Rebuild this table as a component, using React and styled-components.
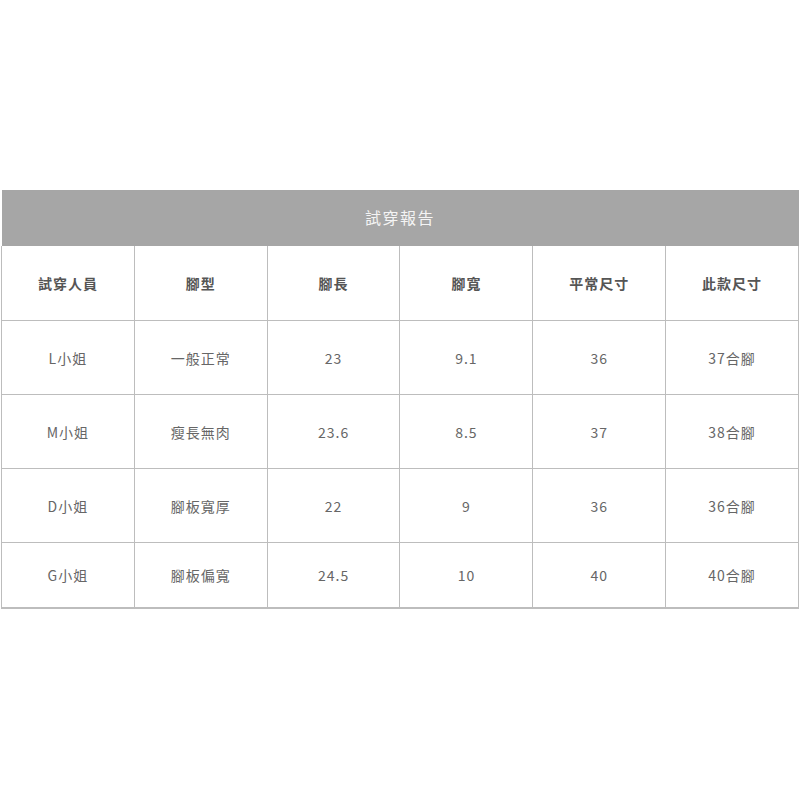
import React from 'react';
import styled, { createGlobalStyle } from 'styled-components';

const GlobalStyle = createGlobalStyle`
  html, body {
    margin: 0;
    padding: 0;
    background: #ffffff;
  }
  body {
    font-family: "Noto Sans CJK TC", "Noto Sans", sans-serif;
  }
`;

const Page = styled.div`
  width: 800px;
  padding: 190px 1px 0;
  box-sizing: border-box;
`;

const Table = styled.table`
  width: 100%;
  border-collapse: collapse;
  table-layout: fixed;
  border-bottom: 2px solid #bdbdbd;
`;

const Caption = styled.th`
  height: 53px;
  background: #a6a6a6;
  color: #f4f4f4;
  font-size: 16px;
  font-weight: 400;
  letter-spacing: 1.5px;
  text-align: center;
  padding: 0 0 3px;
  box-sizing: content-box;
`;

const HeadCell = styled.th`
  height: 74px;
  border: 1px solid #bdbdbd;
  border-top: none;
  color: #555555;
  font-size: 14px;
  font-weight: 700;
  letter-spacing: 1px;
  text-align: center;
  padding: 0;
`;

const Cell = styled.td`
  height: ${p => (p.$last ? '64px' : '73px')};
  border: 1px solid #bdbdbd;
  color: #666666;
  font-size: 14px;
  font-weight: 400;
  letter-spacing: 1px;
  text-align: center;
  padding: 0;
`;

const headers = ['試穿人員', '腳型', '腳長', '腳寬', '平常尺寸', '此款尺寸'];

const rows = [
  ['L小姐', '一般正常', '23', '9.1', '36', '37合腳'],
  ['M小姐', '瘦長無肉', '23.6', '8.5', '37', '38合腳'],
  ['D小姐', '腳板寬厚', '22', '9', '36', '36合腳'],
  ['G小姐', '腳板偏寬', '24.5', '10', '40', '40合腳'],
];

export default function App() {
  return (
    <>
      <GlobalStyle />
      <Page>
        <Table>
          <thead>
            <tr>
              <Caption colSpan={6}>試穿報告</Caption>
            </tr>
            <tr>
              {headers.map(h => (
                <HeadCell key={h}>{h}</HeadCell>
              ))}
            </tr>
          </thead>
          <tbody>
            {rows.map((row, i) => (
              <tr key={row[0]}>
                {row.map((v, j) => (
                  <Cell key={j} $last={i === rows.length - 1}>{v}</Cell>
                ))}
              </tr>
            ))}
          </tbody>
        </Table>
      </Page>
    </>
  );
}
